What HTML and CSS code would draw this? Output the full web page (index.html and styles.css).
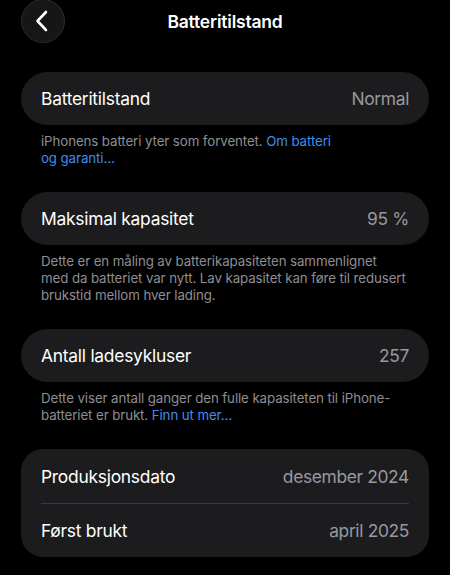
FILE: index.html
```html
<!DOCTYPE html>
<html lang="nb">
<head>
  <meta charset="UTF-8">
  <title>Batteritilstand</title>
  <link rel="stylesheet" href="styles.css">
</head>
<body>

  <div class="header">
    <div class="back">
      <svg width="14" height="22" viewBox="0 0 14 22">
        <path d="M11 2 L2.5 11 L11 20" fill="none" stroke="#fff" stroke-width="2.6" stroke-linecap="round" stroke-linejoin="round"/>
      </svg>
    </div>
    <h1>Batteritilstand</h1>
    <div></div>
  </div>

  <div class="card">
    <div class="row">
      <span class="label">Batteritilstand</span>
      <span class="value">Normal</span>
    </div>
  </div>
  <p class="note">iPhonens batteri yter som forventet. <a>Om batteri<br>og garanti…</a></p>

  <div class="card">
    <div class="row">
      <span class="label">Maksimal kapasitet</span>
      <span class="value">95 %</span>
    </div>
  </div>
  <p class="note">Dette er en måling av batterikapasiteten sammenlignet<br>med da batteriet var nytt. Lav kapasitet kan føre til redusert<br>brukstid mellom hver lading.</p>

  <div class="card">
    <div class="row">
      <span class="label">Antall ladesykluser</span>
      <span class="value">257</span>
    </div>
  </div>
  <p class="note">Dette viser antall ganger den fulle kapasiteten til iPhone-<br>batteriet er brukt. <a>Finn ut mer…</a></p>

  <div class="card group">
    <div class="row">
      <span class="label">Produksjonsdato</span>
      <span class="value">desember 2024</span>
    </div>
    <div class="row">
      <span class="label">Først brukt</span>
      <span class="value">april 2025</span>
    </div>
  </div>

</body>
</html>
```

FILE: styles.css
```css
* {
  box-sizing: border-box;
  margin: 0;
  padding: 0;
}

body {
  background: #000;
  color: #fff;
  font-family: Inter, 'Noto Sans', sans-serif;
  -webkit-font-smoothing: antialiased;
}

.header {
  display: grid;
  grid-template-columns: 1fr auto 1fr;
  align-items: center;
  height: 43px;
  padding: 0 21px;
  margin-bottom: 29px;
}

.back {
  width: 44px;
  height: 44px;
  margin-top: -1px;
  border-radius: 50%;
  background: #161616;
  border: 1px solid #2c2c2e;
  display: flex;
  align-items: center;
  justify-content: center;
  padding-right: 3px;
}

h1 {
  font-size: 17.5px;
  font-weight: 600;
  letter-spacing: -0.2px;
}

.card {
  margin: 0 21px;
  background: #1c1c1e;
  border-radius: 27px;
  padding: 0 20px;
}

.row {
  height: 53px;
  display: flex;
  align-items: center;
  justify-content: space-between;
  font-size: 17.4px;
  letter-spacing: -0.25px;
}

.label {
  color: #fff;
}

.value {
  color: #98989e;
  letter-spacing: -0.35px;
}

.group {
  border-radius: 22px;
}

.group .row {
  height: 54px;
}

.group .row + .row {
  border-top: 1px solid #38383a;
}

.note {
  padding: 8px 41px 0;
  margin-bottom: 25px;
  font-size: 13.3px;
  line-height: 17px;
  color: #8e8e93;
  letter-spacing: -0.1px;
}

.note a {
  color: #3f8cf0;
}
```
